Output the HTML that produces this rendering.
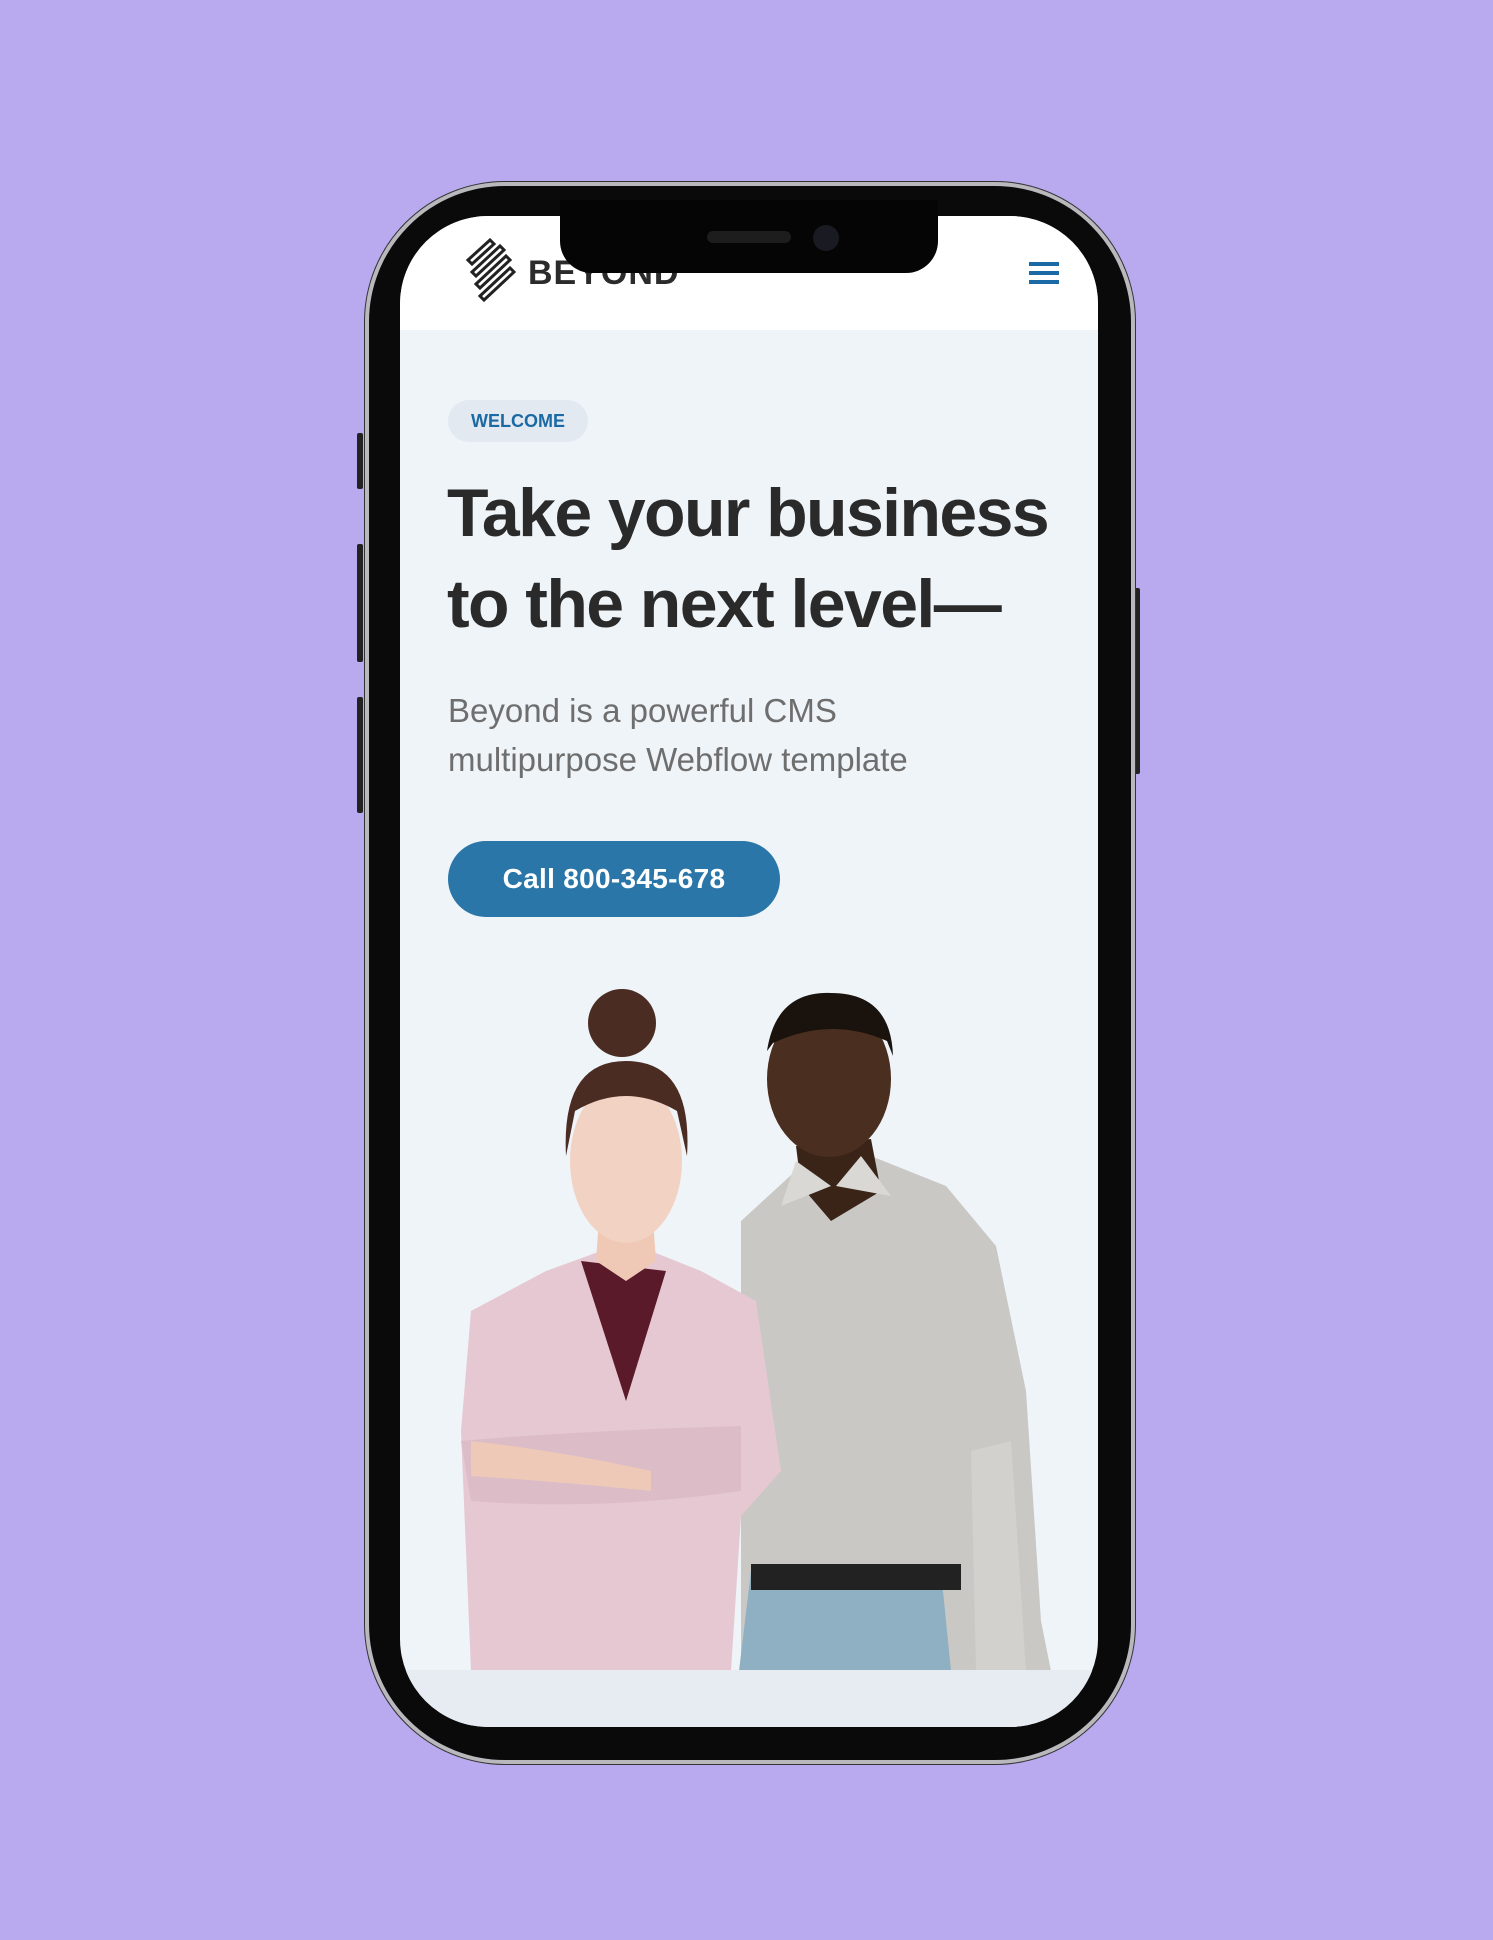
<!DOCTYPE html>
<html><head><meta charset="utf-8"><style>
*{margin:0;padding:0;box-sizing:border-box}
html,body{width:1493px;height:1940px;overflow:hidden;background:#b9a9ee;font-family:"Liberation Sans",sans-serif}
.abs{position:absolute}
.phone{left:365px;top:182px;width:770px;height:1582px;border-radius:140px;background:#0a0a0a;border:4px solid #b9b9bd;box-shadow:0 0 0 1px #333}
.screen{left:400px;top:216px;width:698px;height:1511px;border-radius:88px;background:#eff4f8;overflow:hidden}
.notch{left:560px;top:200px;width:378px;height:73px;background:#050505;border-radius:0 0 32px 32px}
</style></head><body>
<div class="abs" style="left:357px;top:433px;width:6px;height:56px;background:#222;border-radius:2px"></div>
<div class="abs" style="left:357px;top:544px;width:6px;height:118px;background:#222;border-radius:2px"></div>
<div class="abs" style="left:357px;top:697px;width:6px;height:116px;background:#222;border-radius:2px"></div>
<div class="abs" style="left:1134px;top:588px;width:6px;height:186px;background:#222;border-radius:2px"></div>
<div class="abs phone"></div>
<div class="abs screen">
  <div class="abs" style="left:0;top:0;width:698px;height:114px;background:#fff"></div>
  <svg class="abs" style="left:64px;top:22px" width="52" height="70" viewBox="0 0 52 70">
    <g fill="none" stroke="#222" stroke-width="3">
      <path d="M4 22 L26 2 L30 6 L8 26 Z"/><path d="M8 34 L36 8 L40 12 L12 38 Z"/>
      <path d="M12 46 L42 18 L46 22 L16 50 Z"/><path d="M16 58 L46 30 L50 34 L20 62 Z"/>
    </g>
  </svg>
  <div class="abs" style="left:128px;top:38px;font-size:34px;font-weight:700;color:#2b2b2b;letter-spacing:1px">BEYOND</div>
  <div class="abs" style="left:629px;top:46px;width:30px;height:4px;background:#1b6aa5"></div>
  <div class="abs" style="left:629px;top:55px;width:30px;height:4px;background:#1b6aa5"></div>
  <div class="abs" style="left:629px;top:64px;width:30px;height:4px;background:#1b6aa5"></div>
  <div class="abs" style="left:48px;top:184px;width:140px;height:42px;border-radius:21px;background:#e3e9f0;color:#1b6aa5;font-size:18px;font-weight:700;line-height:42px;text-align:center">WELCOME</div>
  <div class="abs" style="left:47px;top:252px;width:660px;font-size:68px;font-weight:700;color:#2a2a2a;letter-spacing:-1.6px;line-height:91px">Take your business<br>to the next level—</div>
  <div class="abs" style="left:48px;top:470px;width:600px;font-size:33px;color:#6e6e6e;line-height:49px;letter-spacing:0px">Beyond is a powerful CMS<br>multipurpose Webflow template</div>
  <div class="abs" style="left:48px;top:625px;width:332px;height:76px;border-radius:38px;background:#2a76a8;color:#fff;font-size:28px;font-weight:700;line-height:76px;text-align:center;letter-spacing:0.3px">Call 800-345-678</div>
  <svg class="abs" style="left:51px;top:755px" width="600" height="700" viewBox="0 0 600 700">
    <path d="M290 250 L350 195 L420 185 L495 215 L545 275 L575 420 L590 650 L600 700 L290 700 Z" fill="#c9c8c5"/>
    <path d="M300 600 L490 600 L500 700 L288 700 Z" fill="#8fb0c3"/>
    <rect x="300" y="593" width="210" height="26" fill="#222"/>
    <path d="M520 480 L560 470 L575 700 L525 700 Z" fill="#d2d1ce"/>
    <path d="M345 175 L420 168 L430 220 L380 250 L350 215 Z" fill="#3a2418"/>
    <ellipse cx="378" cy="108" rx="62" ry="78" fill="#4a2e1f"/>
    <path d="M316 80 Q325 20 380 22 Q440 22 442 85 L436 70 Q380 45 322 72 Z" fill="#1a120d"/>
    <path d="M345 190 L330 235 L380 215 Z" fill="#d9d8d5"/><path d="M410 185 L440 225 L385 215 Z" fill="#d9d8d5"/>
    <path d="M20 340 L95 300 L150 280 L200 280 L250 300 L305 330 L330 500 L290 545 L280 700 L20 700 L10 460 Z" fill="#e6c8d2"/>
    <path d="M130 290 L175 430 L215 300 Z" fill="#5a1a2a"/>
    <path d="M10 470 Q120 460 290 455 L290 520 Q150 540 20 530 Z" fill="#dbbcc7"/>
    <path d="M20 470 Q110 480 200 500 L200 520 Q100 510 20 505 Z" fill="#eec9b8"/>
    <path d="M150 220 L200 220 L205 290 L175 310 L145 290 Z" fill="#efc9b6"/>
    <ellipse cx="175" cy="190" rx="56" ry="82" fill="#f2d2c3"/>
    <path d="M115 185 Q110 90 175 90 Q242 90 236 185 L226 140 Q175 110 124 140 Z" fill="#4a2c22"/>
    <circle cx="171" cy="52" r="34" fill="#4a2c22"/>
  </svg>
  <div class="abs" style="left:0;top:1454px;width:698px;height:60px;background:#e6ecf1"></div>
</div>
<div class="abs notch"></div>
<div class="abs" style="left:707px;top:231px;width:84px;height:12px;border-radius:6px;background:#1d1d1d"></div>
<div class="abs" style="left:813px;top:225px;width:26px;height:26px;border-radius:13px;background:#1a1a22"></div>
</body></html>
